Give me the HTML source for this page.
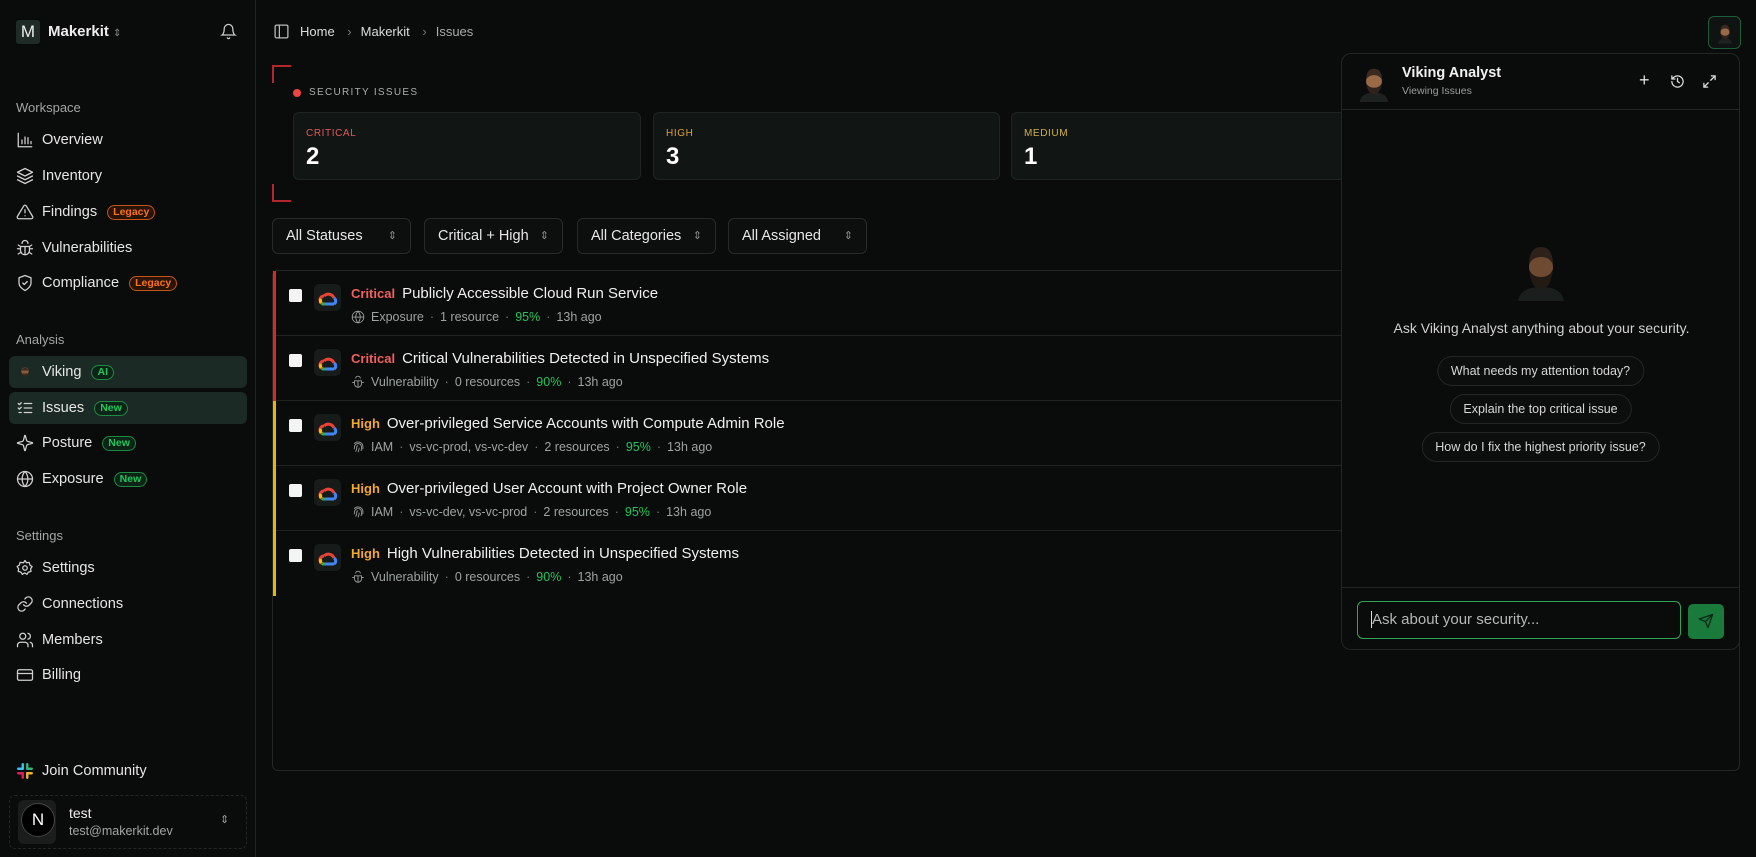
<!DOCTYPE html>
<html><head><meta charset="utf-8"><style>
*{box-sizing:border-box;margin:0;padding:0}
body{width:1756px;height:857px;background:#0a0b0b;font-family:"Liberation Sans",sans-serif;color:#e8e8e8;position:relative;overflow:hidden}
.a{position:absolute}
.side{left:0;top:0;width:256px;height:857px;background:#0a0b0b;border-right:1px solid #1f2322}
.lbl{font-size:13px;color:#a3a6a5;left:16px}
.nav{left:16px;font-size:14.6px;color:#e6e6e6;display:flex;align-items:center;gap:8px;height:20px}
.nav svg{width:18px;height:18px;stroke:#d0d0d0;fill:none;stroke-width:1.7;stroke-linecap:round;stroke-linejoin:round}
.bd{font-size:10.5px;font-weight:bold;padding:0 5px;border-radius:8px;border:1px solid;line-height:13px;margin-left:2px}
.lg{color:#f97316;border-color:#c2551a;background:#2a1408}
.nw{color:#22c55e;border-color:#1d8a45;background:#0c2416}
.sel{left:9px;width:238px;height:32px;background:#1b2a24;border-radius:6px}
.card{top:112px;height:68px;background:#111514;border:1px solid #1f2423;border-radius:6px}
.card .t{position:absolute;left:12px;top:15px;font-size:10px;letter-spacing:.6px}
.card .n{position:absolute;left:12px;top:30px;font-size:24px;font-weight:bold;color:#fff}
.flt{top:218px;height:36px;border:1px solid #262a29;border-radius:6px;background:#0d0f0f;font-size:14.5px;color:#e8e8e8;padding-left:13px;line-height:34px}
.flt i{position:absolute;right:13px;top:0;font-style:normal;color:#888;font-size:11px}
.row{left:273px;width:1466px;height:65px;border-bottom:1px solid #1e2221}
.row .bar{position:absolute;left:0;top:0;width:3px;height:65px}
.row .cb{position:absolute;left:16px;top:18px;width:13px;height:13px;background:#f4f4f4;border-radius:2px}
.row .ic{position:absolute;left:41px;top:13px;width:27px;height:27px;background:#171b1a;border-radius:5px}
.row .ic svg{position:absolute;left:4px;top:6px}
.row .ti{position:absolute;left:78px;top:14px;font-size:15px;color:#f0f0f0;white-space:nowrap}
.row .ti b{font-size:13px;margin-right:7px}
.row .me{position:absolute;left:78px;top:39px;font-size:12.5px;color:#9da3a1;white-space:nowrap;display:flex;align-items:center;gap:6px}
.me svg{width:14px;height:14px;stroke:#9da3a1;fill:none;stroke-width:1.5}
.me s{text-decoration:none;color:#777}
.g{color:#22c55e}
.chip{left:50%;transform:translateX(-50%);height:30px;border:1px solid #222726;border-radius:15px;font-size:12.5px;color:#d6d6d6;line-height:28px;padding:0 13px;white-space:nowrap;background:#0c0e0e}
</style></head><body>
<div class="a side"></div>
<div class="a" style="left:16px;top:20px;width:24px;height:24px;background:#1e2b27;border-radius:3px;color:#eee;font-size:17px;text-align:center;line-height:24px">M</div>
<div class="a" style="left:48px;top:23px;font-size:15px;font-weight:bold;color:#eee">Makerkit <span style="font-size:10px;color:#888;font-weight:normal">⇕</span></div>
<svg class="a" style="left:220px;top:23px" width="17" height="17" viewBox="0 0 24 24" fill="none" stroke="#ccc" stroke-width="1.8" stroke-linecap="round"><path d="M6 8a6 6 0 0 1 12 0c0 7 3 9 3 9H3s3-2 3-9"/><path d="M10.3 21a1.9 1.9 0 0 0 3.4 0"/></svg>

<div class="a lbl" style="top:100px">Workspace</div>
<div class="a nav" style="top:130px"><svg viewBox="0 0 24 24"><path d="M3 3v18h18M8 17v-5M12 17V8M16 17v-8M20 17v-3"/></svg>Overview</div>
<div class="a nav" style="top:166px"><svg viewBox="0 0 24 24"><path d="M12 2 2 7l10 5 10-5z"/><path d="m2 12 10 5 10-5M2 17l10 5 10-5"/></svg>Inventory</div>
<div class="a nav" style="top:202px"><svg viewBox="0 0 24 24"><path d="M10.3 3.9 1.8 18a2 2 0 0 0 1.7 3h17a2 2 0 0 0 1.7-3L13.7 3.9a2 2 0 0 0-3.4 0zM12 9v4M12 17h.01"/></svg>Findings <span class="bd lg">Legacy</span></div>
<div class="a nav" style="top:238px"><svg viewBox="0 0 24 24"><path d="M8 6a4 4 0 0 1 8 0M6 10h12v5a6 6 0 0 1-12 0zM12 10v11M2 13h4M18 13h4M3 8l3 2M21 8l-3 2M3 20l3-2M21 20l-3-2"/></svg>Vulnerabilities</div>
<div class="a nav" style="top:273px"><svg viewBox="0 0 24 24"><path d="M12 22s8-4 8-10V5l-8-3-8 3v7c0 6 8 10 8 10z"/><path d="m9 12 2 2 4-4"/></svg>Compliance <span class="bd lg">Legacy</span></div>

<div class="a lbl" style="top:332px">Analysis</div>
<div class="a sel" style="top:356px"></div>
<div class="a sel" style="top:392px"></div>
<div class="a nav" style="top:362px"><svg viewBox="0 0 24 24" style="stroke:none"><circle cx="12" cy="11" r="5" fill="#8a5a3c"/><path d="M7 14q5 8 10 0z" fill="#3a2a20"/><path d="M7 10q5-7 10 0" fill="#3a2a20"/></svg>Viking <span class="bd nw">AI</span></div>
<div class="a nav" style="top:398px"><svg viewBox="0 0 24 24"><path d="m3 6 1.5 1.5L7 5M3 12l1.5 1.5L7 11M11 6h10M11 12h10M4 18h3M11 18h10"/></svg>Issues <span class="bd nw">New</span></div>
<div class="a nav" style="top:433px"><svg viewBox="0 0 24 24"><path d="M9.9 15.5a2 2 0 0 0-1.4-1.4L2.4 12.5a.5.5 0 0 1 0-1l6.1-1.6a2 2 0 0 0 1.4-1.4l1.6-6.1a.5.5 0 0 1 1 0l1.6 6.1a2 2 0 0 0 1.4 1.4l6.1 1.6a.5.5 0 0 1 0 1l-6.1 1.6a2 2 0 0 0-1.4 1.4l-1.6 6.1a.5.5 0 0 1-1 0z"/></svg>Posture <span class="bd nw">New</span></div>
<div class="a nav" style="top:469px"><svg viewBox="0 0 24 24"><circle cx="12" cy="12" r="10"/><path d="M2 12h20M12 2a15 15 0 0 1 0 20M12 2a15 15 0 0 0 0 20"/></svg>Exposure <span class="bd nw">New</span></div>

<div class="a lbl" style="top:528px">Settings</div>
<div class="a nav" style="top:558px"><svg viewBox="0 0 24 24"><circle cx="12" cy="12" r="3"/><path d="M12 2l2 3 3.5-.5 1 3.5 3 2-2 3 .5 3.5-3.5 1-2 3-3-2-3 2-2-3-3.5-1 .5-3.5-2-3 3-2 1-3.5L10 5z"/></svg>Settings</div>
<div class="a nav" style="top:594px"><svg viewBox="0 0 24 24"><path d="M10 13a5 5 0 0 0 7.5.5l3-3a5 5 0 0 0-7-7l-1.7 1.7"/><path d="M14 11a5 5 0 0 0-7.5-.5l-3 3a5 5 0 0 0 7 7l1.7-1.7"/></svg>Connections</div>
<div class="a nav" style="top:630px"><svg viewBox="0 0 24 24"><circle cx="9" cy="7" r="4"/><path d="M2 21v-2a4 4 0 0 1 4-4h6a4 4 0 0 1 4 4v2M16 3.1a4 4 0 0 1 0 7.8M22 21v-2a4 4 0 0 0-3-3.9"/></svg>Members</div>
<div class="a nav" style="top:665px"><svg viewBox="0 0 24 24"><rect x="2" y="5" width="20" height="14" rx="2"/><path d="M2 10h20"/></svg>Billing</div>

<div class="a nav" style="top:761px"><svg viewBox="0 0 24 24" style="stroke-width:3.2"><path d="M9 3v6" stroke="#36c5f0"/><path d="M3 9h6" stroke="#36c5f0"/><path d="M15 3v6" stroke="#2eb67d"/><path d="M21 9h-6" stroke="#2eb67d"/><path d="M9 21v-6" stroke="#e01e5a"/><path d="M3 15h6" stroke="#e01e5a"/><path d="M15 21v-6" stroke="#ecb22e"/><path d="M21 15h-6" stroke="#ecb22e"/></svg>Join Community</div>
<div class="a" style="left:9px;top:795px;width:238px;height:54px;border:1px dashed #222726;border-radius:6px"></div>
<div class="a" style="left:18px;top:800px;width:38px;height:44px;background:#1a1d1c;border-radius:6px"></div>
<div class="a" style="left:21px;top:803px;width:34px;height:34px;background:#000;border:1px solid #444;border-radius:50%;color:#fff;font-size:17px;text-align:center;line-height:32px">N</div>
<div class="a" style="left:69px;top:805px;font-size:14px;color:#eee">test</div>
<div class="a" style="left:69px;top:824px;font-size:12.5px;color:#a3a6a5">test@makerkit.dev</div>
<div class="a" style="left:220px;top:813px;font-size:11px;color:#999">⇕</div>

<svg class="a" style="left:273px;top:23px" width="17" height="17" viewBox="0 0 24 24" fill="none" stroke="#bbb" stroke-width="1.8"><rect x="3" y="3" width="18" height="18" rx="2"/><path d="M9 3v18"/></svg>
<div class="a" style="left:300px;top:24px;font-size:13px;color:#ddd">Home <span style="color:#777;margin:0 9px">›</span>Makerkit <span style="color:#777;margin:0 9px">›</span><span style="color:#aaa">Issues</span></div>
<div class="a" style="left:1708px;top:16px;width:33px;height:33px;border:1px solid #1d5e3a;border-radius:6px;background:#0f1412"></div>
<svg class="a" style="left:1716px;top:22px" width="18" height="22" viewBox="0 0 40 48"><path d="M4 48q2-12 16-12t16 12z" fill="#1d2120"/><ellipse cx="20" cy="22" rx="10" ry="13" fill="#9a6a48"/><path d="M10 20q0-14 10-14t10 14q-3-6-10-6t-10 6z" fill="#3b2a20"/><path d="M10 24q2 14 10 14t10-14q-3 6-10 6t-10-6z" fill="#2f221a"/></svg>

<div class="a" style="left:272px;top:65px;width:19px;height:18px;border-left:2px solid #b3262c;border-top:2px solid #b3262c"></div>
<div class="a" style="left:272px;top:184px;width:19px;height:18px;border-left:2px solid #b3262c;border-bottom:2px solid #b3262c"></div>
<div class="a" style="left:293px;top:89px;width:8px;height:8px;border-radius:50%;background:#ef4444"></div>
<div class="a" style="left:309px;top:87px;font-size:10px;letter-spacing:1.3px;color:#a9aeac">SECURITY ISSUES</div>
<div class="a card" style="left:293px;width:348px"><div class="t" style="color:#e05a5a">CRITICAL</div><div class="n">2</div></div>
<div class="a card" style="left:653px;width:347px"><div class="t" style="color:#e0a030">HIGH</div><div class="n">3</div></div>
<div class="a card" style="left:1011px;width:340px"><div class="t" style="color:#d4b040">MEDIUM</div><div class="n">1</div></div>

<div class="a flt" style="left:272px;width:139px">All Statuses<i>⇕</i></div>
<div class="a flt" style="left:424px;width:139px">Critical + High<i>⇕</i></div>
<div class="a flt" style="left:577px;width:139px">All Categories<i>⇕</i></div>
<div class="a flt" style="left:728px;width:139px">All Assigned<i>⇕</i></div>

<div class="a" style="left:272px;top:270px;width:1468px;height:501px;border:1px solid #222726;border-radius:6px"></div>

<svg width="0" height="0" style="position:absolute"><defs><g id="gc"><path d="M6 14a4 4 0 0 1 0-8" stroke="#ea4335" stroke-width="3" fill="none"/><path d="M6 6a6 6 0 0 1 10 2" stroke="#ea4335" stroke-width="3" fill="none"/><path d="M16 8a3.5 3.5 0 0 1 0 6" stroke="#4285f4" stroke-width="3" fill="none"/><path d="M4 14h4" stroke="#34a853" stroke-width="3"/><path d="M8 14h8" stroke="#4285f4" stroke-width="3"/><path d="M3 9a4 4 0 0 0 0 4" stroke="#fbbc05" stroke-width="3" fill="none"/></g></defs></svg>

<div class="a row" style="top:271px"><div class="bar" style="background:#dc2626"></div><div class="cb"></div><div class="ic"><svg width="20" height="16" viewBox="0 0 20 16"><use href="#gc"/></svg></div>
<div class="ti"><b style="color:#f06060">Critical</b>Publicly Accessible Cloud Run Service</div>
<div class="me"><svg viewBox="0 0 24 24"><circle cx="12" cy="12" r="10"/><path d="M2 12h20M12 2a15 15 0 0 1 0 20M12 2a15 15 0 0 0 0 20"/></svg>Exposure<s>·</s>1 resource<s>·</s><span class="g">95%</span><s>·</s>13h ago</div></div>
<div class="a row" style="top:336px"><div class="bar" style="background:#dc2626"></div><div class="cb"></div><div class="ic"><svg width="20" height="16" viewBox="0 0 20 16"><use href="#gc"/></svg></div>
<div class="ti"><b style="color:#f06060">Critical</b>Critical Vulnerabilities Detected in Unspecified Systems</div>
<div class="me"><svg viewBox="0 0 24 24"><path d="M8 6a4 4 0 0 1 8 0M6 10h12v5a6 6 0 0 1-12 0zM12 10v11M2 13h4M18 13h4"/></svg>Vulnerability<s>·</s>0 resources<s>·</s><span class="g">90%</span><s>·</s>13h ago</div></div>
<div class="a row" style="top:401px"><div class="bar" style="background:#eab308"></div><div class="cb"></div><div class="ic"><svg width="20" height="16" viewBox="0 0 20 16"><use href="#gc"/></svg></div>
<div class="ti"><b style="color:#f0a830">High</b>Over-privileged Service Accounts with Compute Admin Role</div>
<div class="me"><svg viewBox="0 0 24 24"><path d="M12 10a2 2 0 0 0-2 2c0 4-1 6-2 8M14 13c0 3-1 6-2 8M17 19c1-2 1-4 1-7a6 6 0 0 0-12 0c0 2 0 3-1 4M20 16c.5-1.5.5-3 .5-4a8.5 8.5 0 0 0-15-5.5"/></svg>IAM<s>·</s>vs-vc-prod, vs-vc-dev<s>·</s>2 resources<s>·</s><span class="g">95%</span><s>·</s>13h ago</div></div>
<div class="a row" style="top:466px"><div class="bar" style="background:#eab308"></div><div class="cb"></div><div class="ic"><svg width="20" height="16" viewBox="0 0 20 16"><use href="#gc"/></svg></div>
<div class="ti"><b style="color:#f0a830">High</b>Over-privileged User Account with Project Owner Role</div>
<div class="me"><svg viewBox="0 0 24 24"><path d="M12 10a2 2 0 0 0-2 2c0 4-1 6-2 8M14 13c0 3-1 6-2 8M17 19c1-2 1-4 1-7a6 6 0 0 0-12 0c0 2 0 3-1 4M20 16c.5-1.5.5-3 .5-4a8.5 8.5 0 0 0-15-5.5"/></svg>IAM<s>·</s>vs-vc-dev, vs-vc-prod<s>·</s>2 resources<s>·</s><span class="g">95%</span><s>·</s>13h ago</div></div>
<div class="a row" style="top:531px;border-bottom:none"><div class="bar" style="background:#eab308"></div><div class="cb"></div><div class="ic"><svg width="20" height="16" viewBox="0 0 20 16"><use href="#gc"/></svg></div>
<div class="ti"><b style="color:#f0a830">High</b>High Vulnerabilities Detected in Unspecified Systems</div>
<div class="me"><svg viewBox="0 0 24 24"><path d="M8 6a4 4 0 0 1 8 0M6 10h12v5a6 6 0 0 1-12 0zM12 10v11M2 13h4M18 13h4"/></svg>Vulnerability<s>·</s>0 resources<s>·</s><span class="g">90%</span><s>·</s>13h ago</div></div>

<!-- chat panel -->
<div class="a" style="left:1341px;top:53px;width:399px;height:597px;background:#0a0b0b;border:1px solid #222726;border-radius:10px;overflow:hidden">
 <div class="a" style="left:0;top:55px;width:399px;height:1px;background:#222726"></div>
 <svg class="a" style="left:16px;top:10px" width="32" height="38" viewBox="0 0 40 48"><path d="M2 48q2-12 18-12t18 12z" fill="#1d2120"/><ellipse cx="20" cy="22" rx="10" ry="13" fill="#9a6a48"/><path d="M10 20q0-14 10-14t10 14q-3-6-10-6t-10 6z" fill="#3b2a20"/><path d="M10 24q2 14 10 14t10-14q-3 6-10 6t-10-6z" fill="#2f221a"/></svg>
 <div class="a" style="left:60px;top:11px;font-size:14.5px;font-weight:bold;color:#f2f2f2">Viking Analyst</div>
 <div class="a" style="left:60px;top:31px;font-size:10.5px;color:#9a9f9d">Viewing Issues</div>
 <div class="a" style="left:297px;top:16px;font-size:18px;color:#ddd">+</div>
 <svg class="a" style="left:328px;top:20px" width="15" height="15" viewBox="0 0 24 24" fill="none" stroke="#ddd" stroke-width="2" stroke-linecap="round"><path d="M3 12a9 9 0 1 0 3-6.7L3 8M3 3v5h5M12 7v5l3 2"/></svg>
 <svg class="a" style="left:360px;top:20px" width="15" height="15" viewBox="0 0 24 24" fill="none" stroke="#ddd" stroke-width="2" stroke-linecap="round"><path d="M15 3h6v6M21 3l-7 7M9 21H3v-6M3 21l7-7"/></svg>
 <svg class="a" style="left:176px;top:185px" width="46" height="64" viewBox="0 0 46 60"><path d="M0 60q2-14 23-14t23 14z" fill="#1a1e1d"/><ellipse cx="23" cy="26" rx="12" ry="16" fill="#6e4a32"/><path d="M11 24q0-18 12-18t12 18q-3-8-12-8t-12 8z" fill="#2e2119"/><path d="M11 28q2 20 12 20t12-20q-3 8-12 8t-12-8z" fill="#231a14"/></svg>
 <div class="a" style="left:0;width:399px;top:266px;text-align:center;font-size:14px;color:#d0d0d0">Ask Viking Analyst anything about your security.</div>
 <div class="a chip" style="top:302px">What needs my attention today?</div>
 <div class="a chip" style="top:340px">Explain the top critical issue</div>
 <div class="a chip" style="top:378px">How do I fix the highest priority issue?</div>
 <div class="a" style="left:0;top:533px;width:399px;height:1px;background:#222726"></div>
 <div class="a" style="left:15px;top:547px;width:324px;height:38px;border:1.5px solid #2fa55a;border-radius:6px;font-size:15px;color:#b5b8b7;padding-left:13px;line-height:35px"><span style="border-left:1px solid #ddd;padding-left:0">Ask about your security...</span></div>
 <div class="a" style="left:346px;top:550px;width:36px;height:35px;background:#1a7a3c;border-radius:5px"></div>
 <svg class="a" style="left:356px;top:559px" width="16" height="16" viewBox="0 0 24 24" fill="none" stroke="#0b2a16" stroke-width="2" stroke-linejoin="round"><path d="M22 2 11 13M22 2l-7 20-4-9-9-4z"/></svg>
</div>
</body></html>
